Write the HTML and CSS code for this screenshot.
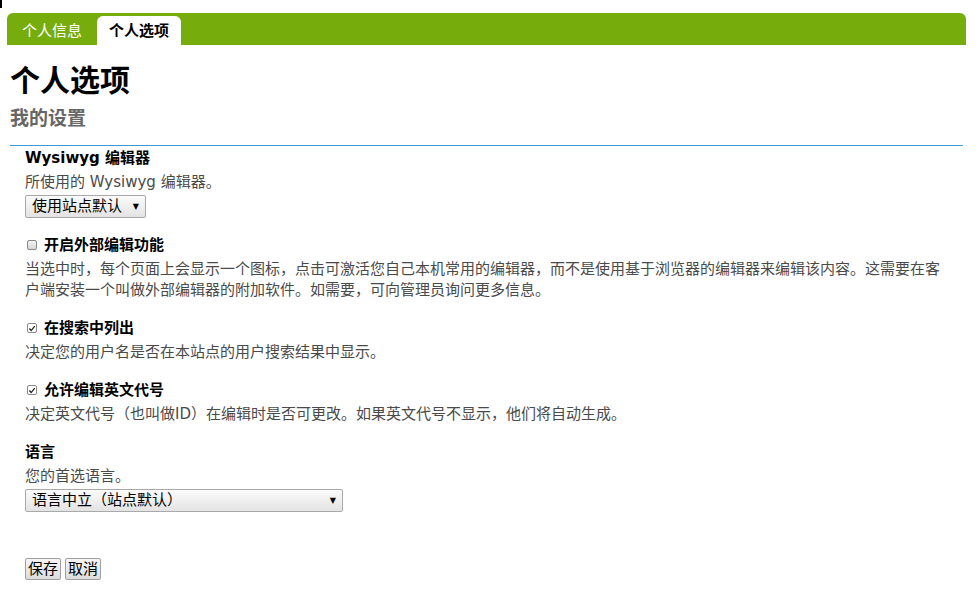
FILE: index.html
```html
<!DOCTYPE html>
<html lang="zh-CN">
<head>
<meta charset="utf-8">
<title>个人选项</title>
<link rel="stylesheet" href="styles.css">
</head>
<body>
<div class="corner-mark"></div>
<nav class="tabs">
  <a class="tab">个人信息</a>
  <a class="tab active">个人选项</a>
</nav>
<h1 class="page-title">个人选项</h1>
<h2 class="page-subtitle">我的设置</h2>
<hr class="divider">
<form class="prefs">
  <div class="item">
    <div class="label">Wysiwyg 编辑器</div>
    <div class="desc">所使用的 Wysiwyg 编辑器。</div>
    <div class="select small"><span class="select-text">使用站点默认</span><span class="arrow">▼</span></div>
  </div>
  <div class="item">
    <div class="label"><span class="check"></span>开启外部编辑功能</div>
    <div class="desc">当选中时，每个页面上会显示一个图标，点击可激活您自己本机常用的编辑器，而不是使用基于浏览器的编辑器来编辑该内容。这需要在客户端安装一个叫做外部编辑器的附加软件。如需要，可向管理员询问更多信息。</div>
  </div>
  <div class="item">
    <div class="label"><span class="check on"><svg viewBox="0 0 9 9" width="9" height="9"><path d="M1.5 4.5 L3.6 6.8 L7.6 1.8" fill="none" stroke="#222" stroke-width="1.4"/></svg></span>在搜索中列出</div>
    <div class="desc">决定您的用户名是否在本站点的用户搜索结果中显示。</div>
  </div>
  <div class="item">
    <div class="label"><span class="check on"><svg viewBox="0 0 9 9" width="9" height="9"><path d="M1.5 4.5 L3.6 6.8 L7.6 1.8" fill="none" stroke="#222" stroke-width="1.4"/></svg></span>允许编辑英文代号</div>
    <div class="desc">决定英文代号（也叫做ID）在编辑时是否可更改。如果英文代号不显示，他们将自动生成。</div>
  </div>
  <div class="item">
    <div class="label">语言</div>
    <div class="desc">您的首选语言。</div>
    <div class="select wide"><span class="select-text">语言中立（站点默认）</span><span class="arrow">▼</span></div>
  </div>
  <div class="buttons">
    <button type="button" class="btn">保存</button>
    <button type="button" class="btn">取消</button>
  </div>
</form>
</body>
</html>
```
FILE: styles.css
```css
html, body {
  margin: 0;
  padding: 0;
  background: #fff;
}
body {
  font-family: "DejaVu Sans", "Noto Sans CJK SC", sans-serif;
  font-size: 15px;
  color: #000;
  position: relative;
}
.corner-mark {
  position: absolute;
  left: 0;
  top: 0;
  width: 2px;
  height: 8px;
  background: #000;
}
.tabs {
  display: flex;
  align-items: flex-end;
  height: 32px;
  margin: 13px 12px 0 7px;
  padding-left: 0;
  background: #76ad0c;
  border-radius: 6px 6px 0 0;
}
.tab {
  display: block;
  height: 29px;
  line-height: 30px;
  padding: 0 15px 0 15px;
  color: #fff;
  font-size: 15px;
  white-space: nowrap;
}
.tab.active {
  background: #fff;
  color: #000;
  font-weight: bold;
  padding: 0 12px;
  border-radius: 6px 6px 0 0;
}
.page-title {
  margin: 18px 0 0 10px;
  font-size: 30px;
  line-height: 36px;
  font-weight: bold;
}
.page-subtitle {
  margin: 7px 0 0 10px;
  font-size: 19px;
  line-height: 24px;
  font-weight: bold;
  color: #666;
}
.divider {
  margin: 15px 15px 0 10px;
  border: 0;
  height: 1px;
  background: #3d9bd4;
}
.prefs {
  margin: 0 26px 0 25px;
}
.item {
  margin-bottom: 15px;
}
.label {
  display: flex;
  align-items: center;
  font-weight: bold;
  line-height: 24px;
}
.desc {
  margin-top: 2px;
  color: #4a4a4a;
  line-height: 21px;
}
.check {
  display: inline-flex;
  align-items: center;
  justify-content: center;
  box-sizing: border-box;
  width: 10px;
  height: 10px;
  margin: 0 7px 0 2px;
  border: 1px solid #8a8a8a;
  border-radius: 2px;
  background: linear-gradient(#f4f4f4, #d6d6d6);
}
.check.on {
  background: #fff;
  border-color: #8a8a8a;
}
.check svg {
  display: block;
}
.select {
  position: relative;
  box-sizing: border-box;
  height: 23px;
  margin-top: 2px;
  padding: 0 0 0 6px;
  border: 1px solid #a9a9a9;
  border-radius: 2px;
  background: linear-gradient(#fbfbfb, #e3e3e3);
  line-height: 21px;
  font-size: 15px;
  color: #000;
}
.select.small { width: 121px; }
.select.wide { width: 318px; }
.select .arrow {
  position: absolute;
  right: 6px;
  top: 0;
  font-size: 8px;
  line-height: 21px;
}
.buttons {
  display: flex;
  gap: 4px;
  margin-top: 46px;
}
.btn {
  height: 22px;
  padding: 0 2px;
  border: 1px solid #a0a0a0;
  border-radius: 2px;
  background: linear-gradient(#f6f6f6, #dcdcdc);
  font-family: "DejaVu Sans", "Noto Sans CJK SC", sans-serif;
  font-size: 15px;
  line-height: 20px;
  color: #000;
}
```
